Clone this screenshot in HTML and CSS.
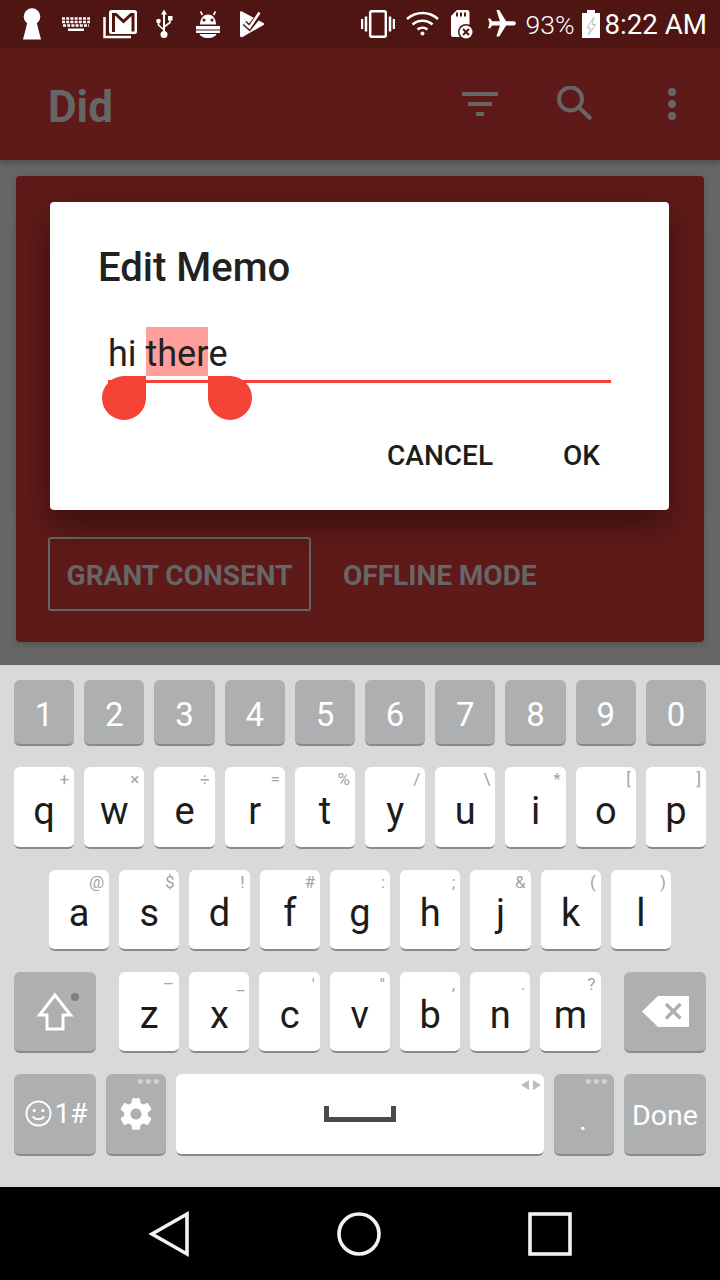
FILE: index.html
```html
<!DOCTYPE html>
<html lang="en">
<head>
    <meta charset="UTF-8">
    <title>Did</title>
    <link rel="stylesheet" href="styles.css">
</head>
<body>
<div class="screen">
    <div class="statusbar">
        <div class="status-left">
            <svg class="slot" viewBox="10 0 44 48"><circle cx="32" cy="16.500" r="8.300"/><path d="M28 20h8l5 19.500H23z"/></svg>
            <svg class="slot" viewBox="54 0 44 48"><path class="kb-row" d="M62 18.500h28M62 22h28M63 25.500h26"/><rect x="68" y="28.500" width="16" height="2.500"/></svg>
            <svg class="slot" viewBox="98 0 44 48"><path class="line" d="M104.500 17v20h26.500"/><rect x="109" y="10" width="28" height="24" rx="2.500"/><path class="cut" d="M113.500 32V14.500h2.500l7.500 7 7.500-7h2v17" stroke-width="3"/></svg>
            <svg class="slot" viewBox="142 0 44 48"><path d="M164 9.500l3 5h-2v18h-2v-18h-2z"/><circle cx="164" cy="34.500" r="3.500"/><path class="line-thin" d="M164 30l-5.500-5v-3M164 27l6-4.500v-3"/><circle cx="158.500" cy="21" r="2.300"/><rect x="168" y="16" width="4.500" height="4.500"/></svg>
            <svg class="slot" viewBox="186 0 44 48"><path d="M200 24.500c0-6 3.500-10 8-10s8 4 8 10z"/><path class="line-thin" d="M202.500 15l-2-3.500M213.500 15l2-3.500"/><circle class="cut-fill" cx="204" cy="20" r="1.500"/><circle class="cut-fill" cx="212" cy="20" r="1.500"/><rect x="196" y="26" width="24" height="3.500"/><rect x="196" y="30.500" width="24" height="2.500"/><path d="M199.500 34h17c-1 2.500-4.500 4-8.500 4s-7.500-1.500-8.500-4z"/></svg>
            <svg class="slot" viewBox="231 0 44 48"><path d="M241 12.500c0-1 1-1.500 2-1l21.500 11.500c1 .5 1 1.500 0 2l-21 12c-1 .5-2.500 0-2.500-1z"/><path class="cut" d="M245.500 23l5 4.500 11-14" stroke-width="5.500"/><path class="line" d="M245.500 23l5 4.500 10-15" stroke-width="2.500"/></svg>
        </div>
        <div class="status-right">
            <svg class="ic-vibrate" viewBox="360 0 34 48"><rect class="line" x="369.200" y="11.200" width="15.600" height="25.600" rx="1.500"/><path class="line" d="M361 19v10M365 16.500v15M389 16.500v15M393 19v10"/></svg>
            <svg class="ic-wifi" viewBox="405 0 33 48"><path class="line" d="M406 19c9-8 22-8 31 0"/><path class="line" d="M411.500 24.500c6-5 14-5 20 0"/><path class="line" d="M416.500 29.500c3-2.500 7-2.500 10 0"/><circle cx="421.500" cy="33.500" r="2"/></svg>
            <svg class="ic-sd" viewBox="450 0 23 48"><path d="M456 10h10c1.500 0 2.500 1 2.500 2.500V37H452c-1 0-2-1-2-2V16z"/><path class="cut" d="M456 12.500v4M460 12.500v4M464 12.500v4" stroke-width="2"/><circle cx="465" cy="32" r="8" fill="#4e1512"/><circle cx="465" cy="32" r="6.500"/><path class="cut" d="M462 29l6 6M468 29l-6 6" stroke-width="2"/></svg>
            <svg class="ic-plane" viewBox="2 0.500 20 23"><path transform="rotate(90 12 12)" d="M21 16v-2l-8-5V3.500c0-.83-.67-1.500-1.500-1.500S10 2.670 10 3.500V9l-8 5v2l8-2.500V19l-2 1.500V22l3.500-1 3.500 1v-1.500L13 19v-5.500l8 2.500z"/></svg>
            <span class="status-text pct">93%</span>
            <svg class="ic-batt" viewBox="581 0 18 48"><path d="M586 10h8v3h5v25h-18V13h5z"/><path class="bolt" d="M593 17l-7 11h3.500l-2 7 7-10.500H591z"/></svg>
            <span class="status-text clock">8:22 AM</span>
        </div>
    </div>

    <div class="appbar">
        <div class="app-title">Did</div>
        <svg class="act-filter" viewBox="462 88 36 32"><rect x="462" y="92" width="36" height="4"/><rect x="468" y="102" width="24" height="4"/><rect x="476" y="112" width="8" height="4"/></svg>
        <svg class="act-search" viewBox="556 86 38 36"><circle class="grey-line" cx="570.500" cy="99" r="11.500"/><path class="grey-line" d="M579 107.500l12 11.500"/></svg>
        <svg class="act-more" viewBox="666 86 12 36"><circle cx="672" cy="92" r="4"/><circle cx="672" cy="104" r="4"/><circle cx="672" cy="116" r="4"/></svg>
    </div>

    <div class="content">
        <div class="card">
            <div class="card-buttons">
                <div class="btn-outline">GRANT CONSENT</div>
                <div class="btn-text">OFFLINE MODE</div>
            </div>

            <div class="dialog">
                <div class="dialog-title">Edit Memo</div>
                <div class="memo-field">
                    <div class="memo-text">hi <span class="memo-sel">ther</span>e</div>
                    <div class="handle handle-left"></div>
                    <div class="handle handle-right"></div>
                </div>
                <div class="dialog-actions">
                    <span>CANCEL</span>
                    <span>OK</span>
                </div>
            </div>
        </div>
    </div>

    <div class="keyboard">
        <div class="kb-row-keys digits">
            <div class="key dark">1</div><div class="key dark">2</div><div class="key dark">3</div><div class="key dark">4</div><div class="key dark">5</div>
            <div class="key dark">6</div><div class="key dark">7</div><div class="key dark">8</div><div class="key dark">9</div><div class="key dark">0</div>
        </div>
        <div class="kb-row-keys">
            <div class="key">q<i class="hint">+</i></div>
            <div class="key">w<i class="hint">×</i></div>
            <div class="key">e<i class="hint">÷</i></div>
            <div class="key">r<i class="hint">=</i></div>
            <div class="key">t<i class="hint">%</i></div>
            <div class="key">y<i class="hint">/</i></div>
            <div class="key">u<i class="hint">\</i></div>
            <div class="key">i<i class="hint">*</i></div>
            <div class="key">o<i class="hint">[</i></div>
            <div class="key">p<i class="hint">]</i></div>
        </div>
        <div class="kb-row-keys inset">
            <div class="key">a<i class="hint">@</i></div>
            <div class="key">s<i class="hint">$</i></div>
            <div class="key">d<i class="hint">!</i></div>
            <div class="key">f<i class="hint">#</i></div>
            <div class="key">g<i class="hint">:</i></div>
            <div class="key">h<i class="hint">;</i></div>
            <div class="key">j<i class="hint">&amp;</i></div>
            <div class="key">k<i class="hint">(</i></div>
            <div class="key">l<i class="hint">)</i></div>
        </div>
        <div class="kb-row-keys">
            <div class="key dark wide shift-key">
                <svg class="ic-shift" viewBox="31 993 48 40"><path class="shift-line" d="M55 996L39.500 1016H47v14h16v-14h7.500z"/><circle class="shift-dot" cx="75" cy="998" r="4"/></svg>
            </div>
            <div class="key">z<i class="hint">–</i></div>
            <div class="key">x<i class="hint">_</i></div>
            <div class="key">c<i class="hint">'</i></div>
            <div class="key">v<i class="hint">"</i></div>
            <div class="key">b<i class="hint">,</i></div>
            <div class="key">n<i class="hint">.</i></div>
            <div class="key">m<i class="hint">?</i></div>
            <div class="key dark wide del-key">
                <svg class="ic-del" viewBox="640 997 47 31"><path d="M640 1012.500L656 997h31v31h-31z"/><path class="del-x" d="M664 1005l14.500 14.500M678.500 1005L664 1019.500"/></svg>
            </div>
        </div>
        <div class="kb-row-keys bottom">
            <div class="key dark wide fn-key">
                <svg class="ic-smile" viewBox="0 0 28 28"><circle class="smile-line" cx="14" cy="14" r="12.500"/><circle cx="9.500" cy="11" r="1.600"/><circle cx="18.500" cy="11" r="1.600"/><path class="smile-line" d="M8 17c3 4 9 4 12 0"/></svg>
                <span>1#</span>
            </div>
            <div class="key dark">
                <div class="more-dots"><b></b><b></b><b></b></div>
                <svg class="ic-gear" viewBox="0 0 24 24"><path d="M19.430 12.980c.04-.32.07-.64.07-.98s-.03-.66-.07-.98l2.110-1.650c.19-.15.24-.42.12-.64l-2-3.460c-.12-.22-.39-.3-.61-.22l-2.490 1c-.52-.4-1.080-.73-1.690-.98l-.38-2.650C14.460 2.180 14.250 2 14 2h-4c-.25 0-.46.18-.49.42l-.38 2.650c-.61.25-1.170.59-1.690.98l-2.490-1c-.23-.09-.49 0-.61.22l-2 3.460c-.13.22-.07.49.12.64l2.110 1.650c-.04.32-.07.65-.07.98s.03.66.07.98l-2.110 1.650c-.19.15-.24.42-.12.64l2 3.460c.12.22.39.3.61.22l2.490-1c.52.4 1.080.73 1.690.98l.38 2.650c.03.24.24.42.49.42h4c.25 0 .46-.18.49-.42l.38-2.650c.61-.25 1.170-.59 1.690-.98l2.490 1c.23.09.49 0 .61-.22l2-3.460c.12-.22.07-.49-.12-.64l-2.110-1.650zM12 15.500c-1.930 0-3.500-1.570-3.500-3.500s1.570-3.500 3.500-3.500 3.500 1.570 3.500 3.500-1.570 3.500-3.500 3.500z"/></svg>
            </div>
            <div class="key space-key">
                <svg class="ic-arrows" viewBox="521 1080 20 10"><path d="M529 1080v10l-8-5zM533 1080v10l8-5z"/></svg>
                <svg class="ic-space" viewBox="324 1107 72 16"><path d="M324 1107h5v11h62v-11h5v16h-72z"/></svg>
            </div>
            <div class="key dark dot-key">
                <div class="more-dots"><b></b><b></b><b></b></div>
                <span>.</span>
            </div>
            <div class="key dark wide done-key">Done</div>
        </div>
    </div>

    <div class="navbar">
        <svg class="nav-ic" viewBox="148 1210 44 48"><path d="M187 1214v40l-35-20z"/></svg>
        <svg class="nav-ic nav-home" viewBox="337 1210 44 48"><circle cx="359" cy="1234" r="20"/></svg>
        <svg class="nav-ic" viewBox="528 1210 44 48"><rect x="530" y="1214" width="40" height="40"/></svg>
    </div>
</div>
</body>
</html>
```

FILE: styles.css
```css
* {
    box-sizing: border-box;
}
body {
    margin: 0;
    font-family: Roboto, "Noto Sans", sans-serif;
    background: #000;
}
.screen {
    width: 720px;
    height: 1280px;
    display: flex;
    flex-direction: column;
    overflow: hidden;
}

/* status bar */
.statusbar {
    height: 48px;
    flex: none;
    display: flex;
    justify-content: space-between;
    background: #4e1512;
    color: #fff;
}
.statusbar svg {
    height: 48px;
    fill: #fff;
    flex: none;
}
.status-left {
    display: flex;
    padding-left: 10px;
}
.status-left .slot {
    width: 44px;
}
.status-right {
    display: flex;
    align-items: center;
    padding-right: 13px;
}
.line {
    fill: none;
    stroke: #fff;
    stroke-width: 2.5;
}
.line-thin {
    fill: none;
    stroke: #fff;
    stroke-width: 1.6;
}
.kb-row {
    fill: none;
    stroke: #fff;
    stroke-width: 2.4;
    stroke-dasharray: 3 1.2;
}
.cut {
    fill: none;
    stroke: #4e1512;
}
.cut-fill {
    fill: #4e1512;
}
.statusbar .ic-vibrate { width: 34px; }
.statusbar .ic-wifi { width: 33px; margin-left: 11px; }
.statusbar .ic-sd { width: 23px; margin-left: 12px; }
.statusbar .ic-plane { width: 28px; margin-left: 14px; height: 32px; }
.statusbar .ic-batt { width: 18px; margin-left: 7px; }
.status-text {
    padding-top: 2px;
    line-height: 48px;
    white-space: nowrap;
}
.pct {
    margin-left: 10px;
    font-size: 26.500px;
    font-weight: 300;
}
.clock {
    margin-left: 5px;
    font-size: 27.700px;
    font-weight: 400;
}
.bolt {
    fill: #fff;
    stroke: #bbb;
    stroke-width: 1;
}

/* app bar */
.appbar {
    height: 112px;
    flex: none;
    position: relative;
    z-index: 2;
    display: flex;
    align-items: center;
    padding-left: 48px;
    background: #5e1a18;
    box-shadow: 0 3px 6px rgba(0, 0, 0, 0.25);
}
.app-title {
    flex: 1;
    padding-top: 6px;
    font-size: 44px;
    font-weight: 700;
    color: #666;
}
.appbar svg {
    flex: none;
    fill: #666;
}
.act-filter {
    width: 36px;
    height: 32px;
}
.act-search {
    width: 38px;
    height: 36px;
    margin-left: 58px;
}
.act-more {
    width: 12px;
    height: 36px;
    margin-left: 72px;
    margin-right: 42px;
}
.grey-line {
    fill: none;
    stroke: #666;
    stroke-width: 4;
}

/* dimmed content */
.content {
    height: 505px;
    flex: none;
    padding: 16px 16px 23px;
    background: #666;
}
.card {
    height: 100%;
    position: relative;
    display: flex;
    align-items: flex-end;
    padding: 0 0 31px 32px;
    background: #5e1a18;
    border-radius: 4px;
    box-shadow: 0 2px 6px rgba(0, 0, 0, 0.2);
}
.card-buttons {
    display: flex;
    align-items: center;
    font-size: 28px;
    font-weight: 700;
    color: #666;
    white-space: nowrap;
}
.btn-outline {
    width: 263px;
    height: 74px;
    line-height: 74px;
    text-align: center;
    border: 2px solid #666;
    border-radius: 3px;
}
.btn-text {
    margin-left: 32px;
    padding-top: 2px;
}

/* dialog */
.dialog {
    position: absolute;
    left: 34px;
    top: 26px;
    width: 619px;
    height: 308px;
    padding-top: 41px;
    background: #fff;
    border-radius: 4px;
    box-shadow: 0 14px 34px rgba(0, 0, 0, 0.4);
}
.dialog-title {
    padding-left: 48px;
    font-size: 40px;
    line-height: 50px;
    font-weight: 500;
    color: #212121;
}
.memo-field {
    position: relative;
    margin: 34px 58px 0;
    padding-bottom: 4px;
    border-bottom: 3px solid #f44336;
}
.memo-text {
    height: 49px;
    font-size: 36px;
    line-height: 55px;
    color: #212121;
    white-space: pre;
}
.memo-sel {
    display: inline-block;
    height: 49px;
    background: #ff9f9b;
}
.handle {
    position: absolute;
    top: 49px;
    width: 44px;
    height: 44px;
    background: #f44336;
}
.handle-left {
    left: -6px;
    border-radius: 50% 0 50% 50%;
}
.handle-right {
    left: 100px;
    border-radius: 0 50% 50% 50%;
}
.dialog-actions {
    display: flex;
    justify-content: flex-end;
    gap: 70px;
    padding: 55px 69px 0 0;
    font-size: 28px;
    line-height: 36px;
    font-weight: 500;
    color: #1c1c1c;
}

/* keyboard */
.keyboard {
    height: 522px;
    flex: none;
    display: flex;
    flex-direction: column;
    gap: 21px;
    padding: 15px 14px 0;
    background: #d9d9d9;
}
.kb-row-keys {
    display: flex;
    gap: 10px;
    height: 81.300px;
    flex: none;
}
.kb-row-keys.digits {
    height: 66.400px;
}
.kb-row-keys.inset {
    padding: 0 35px;
}
.key {
    flex: 1 1 0;
    position: relative;
    display: flex;
    align-items: center;
    justify-content: center;
    padding-top: 7px;
    font-size: 38px;
    color: #1c1c1c;
    background: #fff;
    border-radius: 6px;
    border-bottom: 2px solid #8a8a8a;
}
.key.dark {
    padding-top: 4px;
    font-size: 33px;
    font-weight: 400;
    color: #fff;
    background: #aeafb1;
}
.key.wide {
    flex: 0 0 82px;
}
.key.shift-key {
    margin-right: 13px;
    padding-top: 0;
}
.key.del-key {
    margin-left: 13.400px;
    padding-top: 0;
}
.hint {
    position: absolute;
    top: 2px;
    right: 5px;
    font-size: 17px;
    line-height: 20px;
    font-style: normal;
    color: #a4a4a4;
}
.ic-shift {
    width: 48px;
    height: 40px;
}
.shift-line {
    fill: none;
    stroke: #fff;
    stroke-width: 3;
}
.shift-dot {
    fill: #808080;
}
.ic-del {
    width: 47px;
    height: 31px;
    fill: #fff;
}
.del-x {
    fill: none;
    stroke: #aeafb1;
    stroke-width: 3.500;
}
.key.fn-key {
    gap: 3px;
    padding-top: 0;
    padding-left: 2px;
    font-size: 28px;
    font-weight: 400;
}
.ic-smile {
    width: 27px;
    height: 27px;
    fill: #fff;
}
.smile-line {
    fill: none;
    stroke: #fff;
    stroke-width: 2;
}
.key.dark .ic-gear {
    width: 38px;
    height: 38px;
    fill: #fff;
    margin-top: -3px;
}
.more-dots {
    position: absolute;
    top: 5px;
    right: 7px;
    display: flex;
    gap: 3px;
}
.more-dots b {
    width: 5px;
    height: 5px;
    border-radius: 50%;
    background: #d0d0d0;
}
.space-key {
    flex: 0 0 368px;
    padding-top: 0;
}
.ic-arrows {
    position: absolute;
    top: 6px;
    right: 3px;
    width: 20px;
    height: 10px;
    fill: #bdbdbd;
}
.ic-space {
    width: 72px;
    height: 16px;
    fill: #4a4a4a;
}
.dot-key span {
    position: relative;
    top: 4px;
    right: 1px;
    font-size: 30px;
}
.key.done-key {
    font-size: 28.500px;
    font-weight: 400;
}

/* nav */
.navbar {
    flex: 1;
    display: flex;
    justify-content: center;
    gap: 146px;
    padding-top: 23px;
    background: #000;
}
.nav-ic {
    width: 44px;
    height: 48px;
    flex: none;
    fill: none;
    stroke: #f2f2f2;
    stroke-width: 3.600;
}
.nav-home {
    margin: 0 1px 0 -1px;
}
```
